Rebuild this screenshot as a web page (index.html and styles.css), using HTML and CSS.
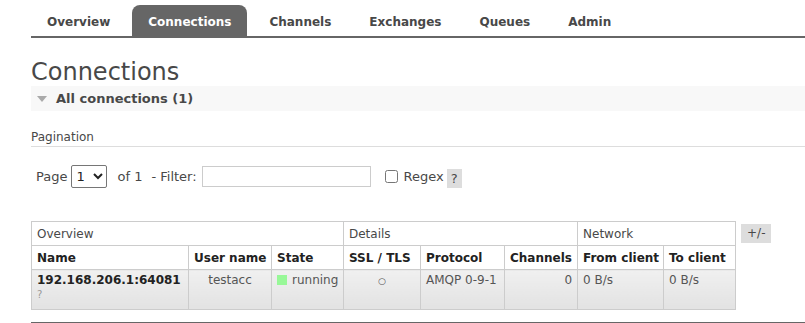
FILE: index.html
```html
<!DOCTYPE html>
<html lang="en">
<head>
    <meta charset="UTF-8">
    <meta name="viewport" content="width=device-width, initial-scale=1.0">
    <link rel="stylesheet" href="styles.css">
</head>
<body>

    <ul class="tabs">
        <li><a href="#">Overview</a></li>
        <li class="active"><a href="#">Connections</a></li>
        <li><a href="#">Channels</a></li>
        <li><a href="#">Exchanges</a></li>
        <li><a href="#">Queues</a></li>
        <li><a href="#">Admin</a></li>
    </ul>

    <div class="main">
        <h1>Connections</h1>
        <div class="section-title">
            <span class="arrow"></span>
            <h2>All connections (1)</h2>
        </div>

        <h3 class="pagination-title">Pagination</h3>
        <div class="pagination">
            <label for="page">Page</label>
            <select id="page">
                <option>1</option>
            </select>
            <span class="of">of <a href="#">1</a></span>
            <label for="filter" class="filter-label">- Filter:</label>
            <input type="text" id="filter">
            <input type="checkbox" id="regex">
            <label for="regex" class="regex-label">Regex</label>
            <span class="help">?</span>
        </div>

        <div class="table-wrap">
            <table class="list">
                <colgroup>
                    <col style="width: 157px">
                    <col style="width: 83px">
                    <col style="width: 72px">
                    <col style="width: 77px">
                    <col style="width: 84px">
                    <col style="width: 73px">
                    <col style="width: 86px">
                    <col style="width: 72px">
                </colgroup>
                <thead>
                    <tr class="group">
                        <th colspan="3">Overview</th>
                        <th colspan="3">Details</th>
                        <th colspan="2">Network</th>
                    </tr>
                    <tr>
                        <th>Name</th>
                        <th>User name</th>
                        <th>State</th>
                        <th>SSL / TLS</th>
                        <th>Protocol</th>
                        <th>Channels</th>
                        <th>From client</th>
                        <th>To client</th>
                    </tr>
                </thead>
                <tbody>
                    <tr>
                        <td class="name"><a href="#">192.168.206.1:64081</a><sub>?</sub></td>
                        <td class="c">testacc</td>
                        <td><span class="state"></span>running</td>
                        <td class="c"><span class="ssl">○</span></td>
                        <td>AMQP 0-9-1</td>
                        <td class="r">0</td>
                        <td>0 B/s</td>
                        <td>0 B/s</td>
                    </tr>
                </tbody>
            </table>
            <span class="toggle">+/-</span>
        </div>

        <div class="rule"></div>
    </div>

</body>
</html>
```

FILE: styles.css
```css
body {
    font-family: "DejaVu Sans", Verdana, sans-serif;
    font-size: 12px;
    color: #484848;
    margin: 0;
    padding: 0;
    background-color: white;
}
a {
    color: #484848;
    text-decoration: none;
}
.tabs {
    list-style: none;
    margin: 5px 0 0 31px;
    padding: 0;
    display: flex;
    border-bottom: 2px solid #666;
}
.tabs li {
    margin-right: 6px;
    border-radius: 8px 8px 0 0;
}
.tabs li a {
    display: block;
    padding: 3px 16px 0 16px;
    height: 28px;
    line-height: 28px;
    font-weight: bold;
    font-size: 12px;
    color: #484848;
}
.tabs li.active {
    background-color: #666;
}
.tabs li.active a {
    color: white;
}
.main {
    padding-left: 31px;
}
h1 {
    font-size: 24px;
    font-weight: normal;
    line-height: 26px;
    margin: 21px 0 0 0;
    color: #484848;
}
.section-title {
    display: flex;
    align-items: center;
    height: 25px;
    background-color: #f8f8f8;
    margin-top: 1px;
}
.arrow {
    width: 0;
    height: 0;
    border-left: 5px solid transparent;
    border-right: 5px solid transparent;
    border-top: 6px solid #aaa;
    margin: 0 9px 0 6px;
}
.section-title h2 {
    margin: 0;
    font-size: 13px;
    font-weight: bold;
    color: #484848;
}
.pagination-title {
    font-size: 12px;
    font-weight: normal;
    margin: 18px 0 0 0;
    padding-bottom: 1px;
    border-bottom: 1px solid #ddd;
    line-height: 16px;
}
.pagination {
    display: flex;
    align-items: center;
    margin: 17px 0 0 5px;
    height: 24px;
    font-size: 13px;
}
.pagination select {
    margin-left: 4px;
    width: 36px;
    height: 23px;
    font-family: "DejaVu Sans", sans-serif;
    font-size: 13px;
    border: 1px solid #767676;
    border-radius: 2px;
    background-color: white;
    color: #222;
}
.of {
    margin-left: 10px;
}
.of a {
    color: #484848;
}
.filter-label {
    margin-left: 9px;
}
.pagination input[type="text"] {
    margin-left: 5px;
    width: 169px;
    height: 21px;
    padding: 0 4px;
    box-sizing: border-box;
    border: 1px solid #ccc;
}
.pagination input[type="checkbox"] {
    margin: 0 0 0 14px;
    width: 13px;
    height: 13px;
}
.regex-label {
    margin-left: 6px;
}
.help {
    margin-left: 3px;
    margin-top: 5px;
    background-color: #ddd;
    padding: 0 4px;
    height: 19px;
    line-height: 19px;
}
.table-wrap {
    display: flex;
    align-items: flex-start;
    margin-top: 33px;
}
.list {
    border-collapse: collapse;
    table-layout: fixed;
    width: 704px;
}
.list th, .list td {
    border: 1px solid #ccc;
    padding: 0 5px;
    text-align: left;
    white-space: nowrap;
    overflow: hidden;
}
.list th {
    height: 24px;
    box-sizing: border-box;
    font-weight: bold;
    font-size: 12px;
    color: #222;
}
.list tr.group th {
    font-weight: normal;
    color: #484848;
}
.list td {
    height: 40px;
    vertical-align: top;
    padding-top: 3px;
    box-sizing: border-box;
    background: linear-gradient(#f0f0f0, #e2e2e2);
    color: #555;
}
.list td.name a {
    font-weight: bold;
    color: #222;
    font-size: 12px;
}
.list td.name sub {
    display: block;
    font-size: 10px;
    color: #999;
    line-height: 12px;
    margin-top: 2px;
}
.list td.c {
    text-align: center;
}
.list td.r {
    text-align: right;
}
.state {
    display: inline-block;
    width: 10px;
    height: 10px;
    background-color: #98f898;
    margin-right: 5px;
    vertical-align: -1px;
}
.ssl {
    font-size: 9px;
}
.toggle {
    margin: 3px 0 0 5px;
    background-color: #ddd;
    padding: 0 6px;
    height: 19px;
    line-height: 19px;
    color: #484848;
}
.rule {
    border-top: 2px solid #666;
    margin-top: 12px;
}
```
